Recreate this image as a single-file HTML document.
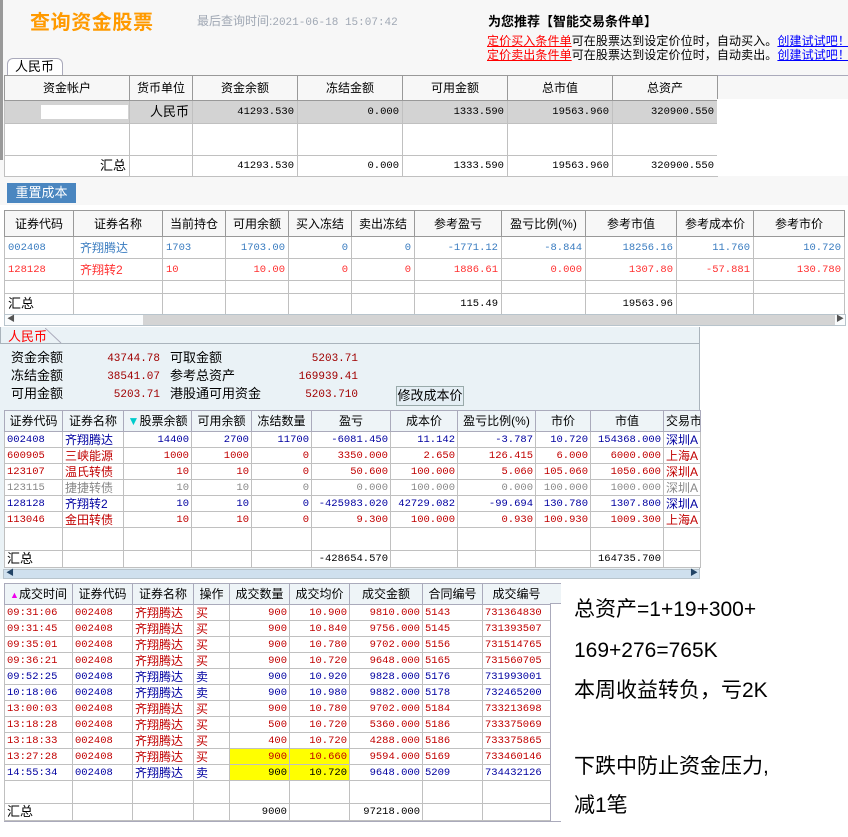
<!DOCTYPE html>
<html><head><meta charset="utf-8">
<style>
*{margin:0;padding:0;box-sizing:border-box}
body{width:848px;height:837px;position:relative;background:#fff;font-family:"Liberation Sans","Noto Sans CJK SC",sans-serif;font-size:12px;color:#000;overflow:hidden}
.a{position:absolute;white-space:nowrap}
.m{font-family:"Liberation Mono","Noto Sans CJK SC",monospace;font-size:10.5px}
table{position:absolute;border-collapse:collapse;table-layout:fixed}
td{border:1px solid #c0c0c0;padding:0 3px;white-space:nowrap;overflow:hidden;font-size:12px;line-height:14px}
td.r{text-align:right}
td.c{text-align:center}
.h td{text-align:center;background:#f7f7f7;border-color:#999}
.n{font-family:"Liberation Mono",monospace;font-size:10.5px}
.b2 td{color:#3a7cc0}.r2 td{color:#ff3030}
.b3 td{color:#0000a0}.r3 td{color:#c00000}.g3 td{color:#888}
.t3 td,.t4 td{line-height:14px;padding:0 2px}
.t3 .h td,.t4 .h td{background:#eef4f7;border-color:#aab}
.hl{background:#ffff00 !important}
.sb{position:absolute;background:#e8eef3;border:1px solid #b8c4cc}
.big{position:absolute;left:574px;font-size:21px;line-height:26px;white-space:nowrap}
</style></head><body>
<div class="a" style="left:0;top:0;width:848px;height:205px;background:#f7f7f7"></div>
<div class="a" style="left:0;top:0;width:3px;height:160px;background:#999"></div>
<div class="a" style="left:30px;top:6px;font-size:20px;font-weight:bold;color:#ff9a00;letter-spacing:0.6px">查询资金股票</div>
<div class="a" style="left:197px;top:12px;color:#a0a8b4;font-size:12px">最后查询时间:<span class="m" style="font-size:11px">2021-06-18 15:07:42</span></div>
<div class="a" style="left:488px;top:11px;font-weight:bold;font-size:13px">为您推荐【智能交易条件单】</div>
<div class="a" style="left:487px;top:32px;font-size:12px;letter-spacing:0.1px"><u style="color:#f00">定价买入条件单</u>可在股票达到设定价位时，自动买入。<u style="color:#00f">创建试试吧！</u></div>
<div class="a" style="left:487px;top:46px;font-size:12px;letter-spacing:0.1px"><u style="color:#f00">定价卖出条件单</u>可在股票达到设定价位时，自动卖出。<u style="color:#00f">创建试试吧！</u></div>
<div class="a" style="left:7px;top:58px;width:56px;height:18px;border:1px solid #aab;border-bottom:none;border-radius:6px 6px 0 0;background:#fff;font-size:13px;padding-left:7px;line-height:16px">人民币</div>
<div class="a" style="left:4px;top:75px;width:844px;height:1px;background:#aab"></div>

<table style="left:4px;top:75px;width:713px;background:#fff">
<colgroup><col style="width:125px"><col style="width:63px"><col style="width:105px"><col style="width:105px"><col style="width:105px"><col style="width:105px"><col style="width:105px"></colgroup>
<tr class="h" style="height:25px"><td>资金帐户</td><td>货币单位</td><td>资金余额</td><td>冻结金额</td><td>可用金额</td><td>总市值</td><td>总资产</td></tr>
<tr style="height:23px;background:#d3d3d3"><td><div style="margin-left:33px;width:87px;height:14px;background:#fff"></div></td><td class="r" style="font-size:13px">人民币</td><td class="r n">41293.530</td><td class="r n">0.000</td><td class="r n">1333.590</td><td class="r n">19563.960</td><td class="r n">320900.550</td></tr>
<tr style="height:32px"><td></td><td></td><td></td><td></td><td></td><td></td><td></td></tr>
<tr style="height:21px"><td class="r" style="font-size:13px">汇总</td><td></td><td class="r n">41293.530</td><td class="r n">0.000</td><td class="r n">1333.590</td><td class="r n">19563.960</td><td class="r n">320900.550</td></tr>
</table>
<div class="a" style="left:717px;top:99px;width:131px;height:77px;background:#fff"></div>

<div class="a" style="left:7px;top:183px;width:69px;height:20px;background:#4a86c0;color:#fff;font-size:13px;text-align:center;line-height:20px">重置成本</div>

<table style="left:4px;top:210px;width:840px;background:#fff">
<colgroup><col style="width:69px"><col style="width:89px"><col style="width:63px"><col style="width:63px"><col style="width:63px"><col style="width:63px"><col style="width:87px"><col style="width:84px"><col style="width:91px"><col style="width:77px"><col style="width:91px"></colgroup>
<tr class="h" style="height:26px"><td>证券代码</td><td>证券名称</td><td>当前持仓</td><td>可用余额</td><td>买入冻结</td><td>卖出冻结</td><td>参考盈亏</td><td>盈亏比例(%)</td><td>参考市值</td><td>参考成本价</td><td>参考市价</td></tr>
<tr class="b2" style="height:22px"><td class="n">002408</td><td style="padding-left:6px">齐翔腾达</td><td class="n">1703</td><td class="r n">1703.00</td><td class="r n">0</td><td class="r n">0</td><td class="r n">-1771.12</td><td class="r n">-8.844</td><td class="r n">18256.16</td><td class="r n">11.760</td><td class="r n">10.720</td></tr>
<tr class="r2" style="height:22px"><td class="n">128128</td><td style="padding-left:6px">齐翔转2</td><td class="n">10</td><td class="r n">10.00</td><td class="r n">0</td><td class="r n">0</td><td class="r n">1886.61</td><td class="r n">0.000</td><td class="r n">1307.80</td><td class="r n">-57.881</td><td class="r n">130.780</td></tr>
<tr style="height:13px"><td></td><td></td><td></td><td></td><td></td><td></td><td></td><td></td><td></td><td></td><td></td></tr>
<tr style="height:21px"><td style="font-size:13px">汇总</td><td></td><td></td><td></td><td></td><td></td><td class="r n">115.49</td><td></td><td class="r n">19563.96</td><td></td><td></td></tr>
</table>
<div class="sb" style="left:4px;top:314px;width:842px;height:12px;background:#fafcfd"><div style="position:absolute;left:138px;top:0;right:10px;height:10px;background:#d4d4d4"></div><span style="position:absolute;left:2px;top:-2px;font-size:8px;color:#555">◀</span><span style="position:absolute;right:1px;top:-2px;font-size:8px;color:#555">▶</span></div>

<div class="a" style="left:0;top:327px;width:700px;height:252px;background:#eaf2f6"></div>
<div class="a" style="left:0;top:343px;width:700px;height:1px;background:#aab4bc"></div>
<div class="a" style="left:0;top:327px;width:1px;height:17px;background:#aab4bc"></div>
<div class="a" style="left:699px;top:327px;width:1px;height:252px;background:#aab4bc"></div>
<div class="a" style="left:8px;top:326px;color:#f00;font-size:13px">人民币</div>
<svg class="a" style="left:45px;top:328px" width="18" height="16"><line x1="0" y1="0" x2="16" y2="15" stroke="#aab" /></svg>
<div class="a" style="left:11px;top:349px;font-size:13px;line-height:18px">资金余额<br>冻结金额<br>可用金额</div>
<div class="a m" style="left:90px;top:350px;width:70px;text-align:right;color:#a00000;line-height:18px;font-size:11px">43744.78<br>38541.07<br>5203.71</div>
<div class="a" style="left:170px;top:349px;font-size:13px;line-height:18px">可取金额<br>参考总资产<br>港股通可用资金</div>
<div class="a m" style="left:280px;top:350px;width:78px;text-align:right;color:#a00000;line-height:18px;font-size:11px">5203.71<br>169939.41<br>5203.710</div>
<div class="a" style="left:396px;top:386px;width:68px;height:20px;background:#e4eef4;border:1px solid #9aa;font-size:13px;text-align:center;line-height:18px">修改成本价</div>

<table class="t3" style="left:4px;top:410px;width:696px;background:#fff">
<colgroup><col style="width:58px"><col style="width:61px"><col style="width:68px"><col style="width:60px"><col style="width:60px"><col style="width:79px"><col style="width:67px"><col style="width:78px"><col style="width:55px"><col style="width:73px"><col style="width:37px"></colgroup>
<tr class="h" style="height:21px"><td>证券代码</td><td>证券名称</td><td><span style="color:#0cc">▼</span>股票余额</td><td>可用余额</td><td>冻结数量</td><td>盈亏</td><td>成本价</td><td>盈亏比例(%)</td><td>市价</td><td>市值</td><td style="text-align:left">交易市</td></tr>
<tr class="b3" style="height:16px"><td class="n">002408</td><td>齐翔腾达</td><td class="r n">14400</td><td class="r n">2700</td><td class="r n">11700</td><td class="r n">-6081.450</td><td class="r n">11.142</td><td class="r n">-3.787</td><td class="r n">10.720</td><td class="r n">154368.000</td><td>深圳A</td></tr>
<tr class="r3" style="height:16px"><td class="n">600905</td><td>三峡能源</td><td class="r n">1000</td><td class="r n">1000</td><td class="r n">0</td><td class="r n">3350.000</td><td class="r n">2.650</td><td class="r n">126.415</td><td class="r n">6.000</td><td class="r n">6000.000</td><td>上海A</td></tr>
<tr class="r3" style="height:16px"><td class="n">123107</td><td>温氏转债</td><td class="r n">10</td><td class="r n">10</td><td class="r n">0</td><td class="r n">50.600</td><td class="r n">100.000</td><td class="r n">5.060</td><td class="r n">105.060</td><td class="r n">1050.600</td><td>深圳A</td></tr>
<tr class="g3" style="height:16px"><td class="n">123115</td><td>捷捷转债</td><td class="r n">10</td><td class="r n">10</td><td class="r n">0</td><td class="r n">0.000</td><td class="r n">100.000</td><td class="r n">0.000</td><td class="r n">100.000</td><td class="r n">1000.000</td><td>深圳A</td></tr>
<tr class="b3" style="height:16px"><td class="n">128128</td><td>齐翔转2</td><td class="r n">10</td><td class="r n">10</td><td class="r n">0</td><td class="r n">-425983.020</td><td class="r n">42729.082</td><td class="r n">-99.694</td><td class="r n">130.780</td><td class="r n">1307.800</td><td>深圳A</td></tr>
<tr class="r3" style="height:16px"><td class="n">113046</td><td>金田转债</td><td class="r n">10</td><td class="r n">10</td><td class="r n">0</td><td class="r n">9.300</td><td class="r n">100.000</td><td class="r n">0.930</td><td class="r n">100.930</td><td class="r n">1009.300</td><td>上海A</td></tr>
<tr style="height:23px"><td></td><td></td><td></td><td></td><td></td><td></td><td></td><td></td><td></td><td></td><td></td></tr>
<tr style="height:17px"><td style="font-size:13px">汇总</td><td></td><td></td><td></td><td></td><td class="r n">-428654.570</td><td></td><td></td><td></td><td class="r n">164735.700</td><td></td></tr>
</table>
<div class="sb" style="left:3px;top:569px;width:697px;height:10px;background:#cfe0ee"><span style="position:absolute;left:2px;top:-3px;font-size:8px;color:#246">◀</span><span style="position:absolute;right:1px;top:-3px;font-size:8px;color:#246">▶</span></div>

<table class="t4" style="left:4px;top:583px;width:546px;background:#fff">
<colgroup><col style="width:68px"><col style="width:60px"><col style="width:61px"><col style="width:36px"><col style="width:60px"><col style="width:60px"><col style="width:73px"><col style="width:60px"><col style="width:68px"></colgroup>
<tr class="h" style="height:21px"><td><span style="color:#e0e;font-size:9px">▲</span>成交时间</td><td>证券代码</td><td>证券名称</td><td>操作</td><td>成交数量</td><td>成交均价</td><td>成交金额</td><td>合同编号</td><td>成交编号</td></tr>
<tr class="r3" style="height:16px"><td class="n">09:31:06</td><td class="n">002408</td><td>齐翔腾达</td><td>买</td><td class="r n">900</td><td class="r n">10.900</td><td class="r n">9810.000</td><td class="n">5143</td><td class="n">731364830</td></tr>
<tr class="r3" style="height:16px"><td class="n">09:31:45</td><td class="n">002408</td><td>齐翔腾达</td><td>买</td><td class="r n">900</td><td class="r n">10.840</td><td class="r n">9756.000</td><td class="n">5145</td><td class="n">731393507</td></tr>
<tr class="r3" style="height:16px"><td class="n">09:35:01</td><td class="n">002408</td><td>齐翔腾达</td><td>买</td><td class="r n">900</td><td class="r n">10.780</td><td class="r n">9702.000</td><td class="n">5156</td><td class="n">731514765</td></tr>
<tr class="r3" style="height:16px"><td class="n">09:36:21</td><td class="n">002408</td><td>齐翔腾达</td><td>买</td><td class="r n">900</td><td class="r n">10.720</td><td class="r n">9648.000</td><td class="n">5165</td><td class="n">731560705</td></tr>
<tr class="b3" style="height:16px"><td class="n">09:52:25</td><td class="n">002408</td><td>齐翔腾达</td><td>卖</td><td class="r n">900</td><td class="r n">10.920</td><td class="r n">9828.000</td><td class="n">5176</td><td class="n">731993001</td></tr>
<tr class="b3" style="height:16px"><td class="n">10:18:06</td><td class="n">002408</td><td>齐翔腾达</td><td>卖</td><td class="r n">900</td><td class="r n">10.980</td><td class="r n">9882.000</td><td class="n">5178</td><td class="n">732465200</td></tr>
<tr class="r3" style="height:16px"><td class="n">13:00:03</td><td class="n">002408</td><td>齐翔腾达</td><td>买</td><td class="r n">900</td><td class="r n">10.780</td><td class="r n">9702.000</td><td class="n">5184</td><td class="n">733213698</td></tr>
<tr class="r3" style="height:16px"><td class="n">13:18:28</td><td class="n">002408</td><td>齐翔腾达</td><td>买</td><td class="r n">500</td><td class="r n">10.720</td><td class="r n">5360.000</td><td class="n">5186</td><td class="n">733375069</td></tr>
<tr class="r3" style="height:16px"><td class="n">13:18:33</td><td class="n">002408</td><td>齐翔腾达</td><td>买</td><td class="r n">400</td><td class="r n">10.720</td><td class="r n">4288.000</td><td class="n">5186</td><td class="n">733375865</td></tr>
<tr class="r3" style="height:16px"><td class="n">13:27:28</td><td class="n">002408</td><td>齐翔腾达</td><td>买</td><td class="r n hl">900</td><td class="r n hl">10.660</td><td class="r n">9594.000</td><td class="n">5169</td><td class="n">733460146</td></tr>
<tr class="b3" style="height:16px"><td class="n">14:55:34</td><td class="n">002408</td><td>齐翔腾达</td><td>卖</td><td class="r n hl" style="color:#000">900</td><td class="r n hl" style="color:#000">10.720</td><td class="r n">9648.000</td><td class="n">5209</td><td class="n">734432126</td></tr>
<tr style="height:23px"><td></td><td></td><td></td><td></td><td></td><td></td><td></td><td></td><td></td></tr>
<tr style="height:17px"><td style="font-size:13px">汇总</td><td></td><td></td><td></td><td class="r n">9000</td><td></td><td class="r n">97218.000</td><td></td><td></td></tr>
</table>
<div class="a" style="left:550px;top:583px;width:11px;height:21px;background:#eef4f7;border-top:1px solid #aab;border-bottom:1px solid #aab"></div>
<div class="a" style="left:550px;top:604px;width:1px;height:218px;background:#aab"></div>
<div class="a" style="left:4px;top:821px;width:557px;height:1px;background:#aab"></div>

<div class="big" style="top:597px">总资产=1+19+300+</div>
<div class="big" style="top:638px">169+276=765K</div>
<div class="big" style="top:678px">本周收益转负，亏2K</div>
<div class="big" style="top:754px">下跌中防止资金压力,</div>
<div class="big" style="top:793px">减1笔</div>
</body></html>
